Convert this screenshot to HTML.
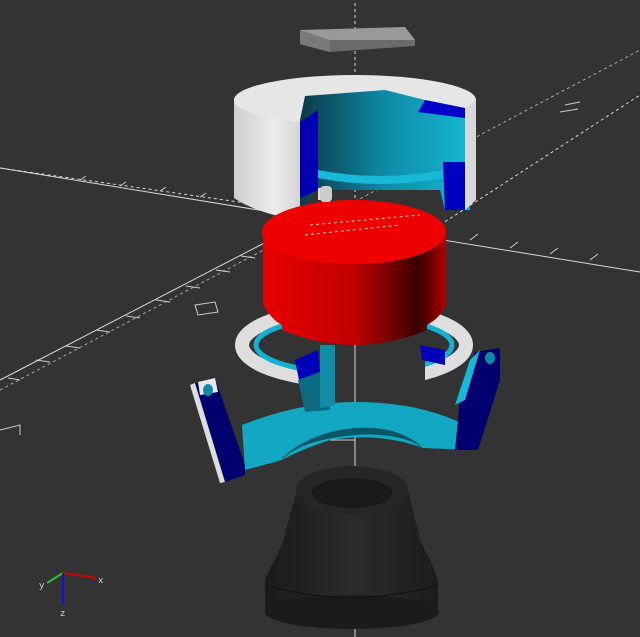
<!DOCTYPE html>
<html><head><style>
html,body{margin:0;padding:0;background:#333333;}
svg{display:block;}
</style></head><body>
<svg width="640" height="637" viewBox="0 0 640 637" xmlns="http://www.w3.org/2000/svg">
<defs>
<linearGradient id="red" x1="0" x2="1"><stop offset="0" stop-color="#e80000"/><stop offset="0.5" stop-color="#c00000"/><stop offset="0.85" stop-color="#3a0000"/><stop offset="1" stop-color="#b00000"/></linearGradient>
<linearGradient id="wh" x1="0" x2="1"><stop offset="0" stop-color="#cfcfcf"/><stop offset="0.6" stop-color="#ececec"/><stop offset="1" stop-color="#d5d5d5"/></linearGradient>
<linearGradient id="cy" x1="0" x2="1"><stop offset="0" stop-color="#0a3a48"/><stop offset="0.5" stop-color="#0e8aa5"/><stop offset="1" stop-color="#14b7d3"/></linearGradient>
<linearGradient id="bk" x1="0" x2="1"><stop offset="0" stop-color="#1a1a1a"/><stop offset="0.5" stop-color="#2b2b2b"/><stop offset="1" stop-color="#1c1c1c"/></linearGradient>
<clipPath id="rc"><rect x="0" y="0" width="305" height="637"/><rect x="425" y="0" width="215" height="637"/><rect x="0" y="0" width="640" height="340"/></clipPath>
</defs>
<rect width="640" height="637" fill="#333333"/>
<g stroke="#d8d8d8" stroke-width="1" fill="none">
<line x1="0" y1="390" x2="640" y2="50" stroke-dasharray="3 3" opacity="0.7"/>
<line x1="0" y1="168" x2="640" y2="272"/>
<line x1="0" y1="168" x2="260" y2="205" stroke-dasharray="3 3"/>
<line x1="0" y1="380" x2="270" y2="240"/>
<line x1="355" y1="0" x2="355" y2="637"/>
<line x1="355" y1="0" x2="355" y2="330" stroke-dasharray="3 3" stroke="#333"/>
<line x1="440" y1="225" x2="640" y2="95" stroke-dasharray="3 3"/>
</g>
<g stroke="#cccccc" stroke-width="1">
<path d="M20 380 l-12 -2 M50 362 l-14 -2 M80 348 l-14 -2 M110 332 l-14 -2 M140 318 l-14 -2 M170 302 l-14 -2 M200 288 l-14 -2 M230 272 l-14 -2 M255 258 l-14 -2"/>
<path d="M470 240 l8 -6 M510 248 l8 -6 M550 254 l8 -6 M590 260 l8 -6 M80 180 l6 -4 M120 186 l6 -4 M160 191 l6 -4 M200 197 l6 -4"/>
<path d="M330 420 h25 M330 440 h25 M330 470 h25 M330 500 h25"/>
<path d="M195 305 l20 -3 l3 10 l-20 3z M565 105 l15 -3 M560 112 l18 -3 M0 430 l20 -5 l0 10" fill="none"/>
</g>
<polygon points="300,30 405,27 415,40 330,52 300,44" fill="#999"/>
<polygon points="330,40 415,40 415,46 330,52" fill="#6a6a6a"/>
<polygon points="300,30 330,40 330,52 300,44" fill="#7a7a7a"/>
<path d="M234 100 L234 198 Q258 214 300 220 L300 100 Z" fill="url(#wh)"/>
<ellipse cx="355" cy="100" rx="121" ry="25" fill="#e6e6e6"/>
<path d="M300 120 L305 96 L385 90 L425 100 L465 108 L470 210 L445 210 L440 190 L315 190 L300 215 Z" fill="url(#cy)"/>
<path d="M300 122 L318 110 L318 190 L300 198 Z" fill="#0000b0"/>
<path d="M418 112 L465 118 L465 108 L425 100 Z" fill="#0000c8"/>
<path d="M443 162 L465 162 L465 210 L445 210 Z" fill="#0000c0"/>
<path d="M465 108 L476 100 L476 200 L465 210Z" fill="#d8d8d8"/>
<path d="M318 170 Q380 182 443 170 L443 178 Q380 190 318 178Z" fill="#18b8d8"/>
<rect x="318" y="188" width="12" height="12" fill="#e0e0e0"/>
<g clip-path="url(#rc)">
<ellipse cx="354" cy="345" rx="112" ry="36" fill="none" stroke="#dedede" stroke-width="14"/>
<ellipse cx="354" cy="345" rx="98" ry="28" fill="none" stroke="#14b0d0" stroke-width="5"/>
</g>
<path d="M263 235 L263 305 Q272 320 282 325 L282 330 Q355 360 427 330 L427 325 Q440 318 446 305 L446 235 Z" fill="url(#red)"/>
<ellipse cx="354" cy="232" rx="92" ry="32" fill="#ee0000"/>
<rect x="320" y="186" width="12" height="16" rx="4" fill="#ccc"/>
<g stroke="#ffffff" stroke-width="1" stroke-dasharray="3 3" opacity="0.8"><line x1="310" y1="225" x2="420" y2="215"/><line x1="305" y1="235" x2="400" y2="225"/></g>
<path d="M420 345 L445 350 L445 365 L422 360Z" fill="#0000b8"/>
<path d="M295 360 L318 350 L320 375 L300 385Z" fill="#0000b8"/>
<path d="M242 425 Q300 402 355 402 Q420 402 465 425 L470 450 L423 448 Q380 432 330 440 Q300 450 282 460 L245 470 Z" fill="#12a8c4"/>
<path d="M282 460 Q300 440 355 435 Q400 432 423 448 L420 445 Q395 425 355 428 Q310 432 282 458Z" fill="#075565"/>
<path d="M298 380 L325 370 L330 410 L305 412Z" fill="#0c6a80"/>
<path d="M320 345 L335 345 L335 405 L320 408Z" fill="#108ca6"/>
<path d="M190 385 L215 378 L245 465 L245 475 L225 482 Z" fill="#00006e"/>
<path d="M190 385 L195 383 L225 482 L220 483Z" fill="#dddddd"/>
<path d="M198 382 L215 378 L218 392 L200 395Z" fill="#e8e8e8"/>
<ellipse cx="208" cy="390" rx="5" ry="6" fill="#0e8aa5"/>
<path d="M475 352 L500 348 L500 380 L478 450 L455 450 L460 400 Z" fill="#00006e"/>
<path d="M470 360 L480 350 L465 400 L455 405Z" fill="#14b8d8"/>
<ellipse cx="490" cy="358" rx="5" ry="6" fill="#0e8aa5"/>
<path d="M297 490 L282 545 L272 565 L265 580 L265 610 Q350 645 438 610 L438 580 L430 560 L420 540 L408 490 Z" fill="url(#bk)"/>
<ellipse cx="352" cy="612" rx="87" ry="17" fill="#1b1b1b"/>
<ellipse cx="352" cy="490" rx="56" ry="24" fill="#262626"/>
<ellipse cx="352" cy="493" rx="40" ry="15" fill="#1a1a1a"/>
<path d="M265 585 Q350 610 438 585" stroke="#111" fill="none"/>
<line x1="63" y1="573" x2="96" y2="578" stroke="#d00000" stroke-width="2"/>
<line x1="63" y1="573" x2="47" y2="583" stroke="#30c030" stroke-width="2"/>
<line x1="63" y1="573" x2="63" y2="605" stroke="#1010e0" stroke-width="2"/>
<text x="98" y="583" font-family="Liberation Mono, monospace" font-size="9" fill="#ddd">x</text>
<text x="39" y="588" font-family="Liberation Mono, monospace" font-size="9" fill="#ddd">y</text>
<text x="60" y="616" font-family="Liberation Mono, monospace" font-size="9" fill="#ddd">z</text>
</svg>
</body></html>
